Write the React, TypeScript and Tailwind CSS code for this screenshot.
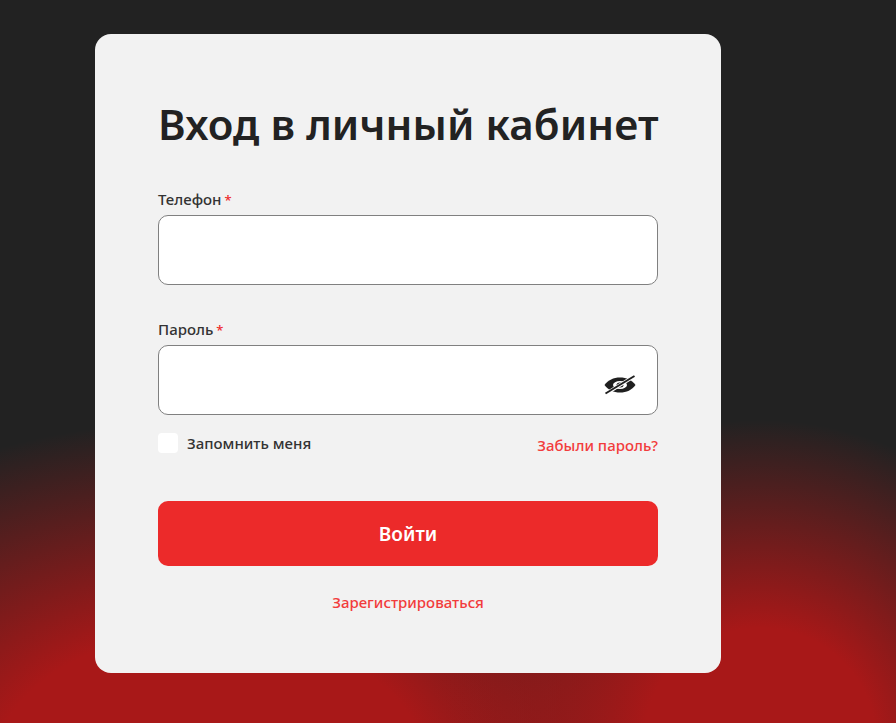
import React from 'react';

const Field: React.FC<{ label: string; children?: React.ReactNode }> = ({ label, children }) => (
  <div>
    <div className="h-[20px] text-[15px] leading-[20px] font-medium text-[#333333]">
      {label}
      <span className="ml-[3px] text-[13px] leading-[13px] text-[#ee2a2a]">*</span>
    </div>
    <div className="mt-[6px] h-[70px] rounded-[10px] border border-[#808080] bg-white flex items-center justify-end pr-[21px]">
      {children}
    </div>
  </div>
);

const EyeOff = () => (
  <svg className="mt-[10px]" width="32" height="24" viewBox="0 0 32 24" fill="none">
    <path d="M0.500 12C4 7 9.500 4.500 16 4.500S28 7 31.500 12C28 17 22.500 19.500 16 19.500S4 17 0.500 12Z" fill="#1f1f1f" />
    <ellipse cx="16" cy="12" rx="7" ry="4" fill="#ffffff" />
    <ellipse cx="16" cy="12" rx="3.500" ry="2.500" fill="#1f1f1f" />
    <path d="M1.500 21 L30.500 3" stroke="#ffffff" strokeWidth="3.500" />
    <path d="M1.500 20.500 L30.500 3" stroke="#1f1f1f" strokeWidth="2" />
  </svg>
);

const App: React.FC = () => {
  return (
    <div className="h-[723px] overflow-hidden pt-[34px] pl-[95px] font-['Noto_Sans',sans-serif] bg-[#222222] bg-[radial-gradient(ellipse_330px_320px_at_760px_740px,#a81818_35%,rgba(168,24,24,0)_100%),radial-gradient(ellipse_540px_350px_at_210px_770px,#a81818_40%,rgba(168,24,24,0)_100%)]">
      <div className="w-[626px] h-[639px] rounded-[16px] bg-[#f2f2f2] pt-[60px] px-[63px]">
        <h1 className="text-[42px] leading-[60px] font-semibold tracking-[0.1px] text-[#222222] whitespace-nowrap">Вход в личный кабинет</h1>

        <div className="mt-[35px] flex flex-col gap-[34px]">
          <Field label="Телефон" />
          <Field label="Пароль">
            <EyeOff />
          </Field>
        </div>

        <div className="mt-[16px] flex justify-between">
          <label className="flex items-center gap-[9px]">
            <span className="w-[20px] h-[20px] rounded-[4px] bg-white" />
            <span className="text-[15px] leading-[20px] font-medium text-[#333333]">Запомнить меня</span>
          </label>
          <a className="mt-[4px] text-[15px] leading-[20px] font-medium text-[#f23c3c]">Забыли пароль?</a>
        </div>

        <button className="mt-[46px] w-full h-[65px] pt-[2px] rounded-[10px] bg-[#ec2a2a] text-white text-[19px] font-semibold">
          Войти
        </button>

        <div className="mt-[26px] text-center text-[15px] leading-[20px] font-medium text-[#f23c3c]">
          Зарегистрироваться
        </div>
      </div>
    </div>
  );
};

export default App;
